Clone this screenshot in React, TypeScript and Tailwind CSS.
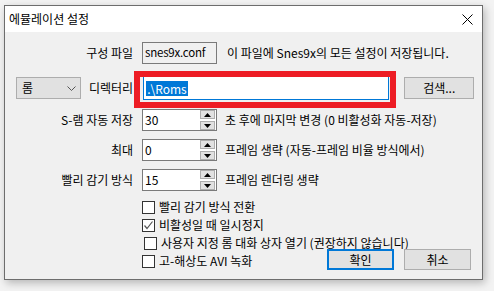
import React from 'react';

const font = { fontFamily: '"Noto Sans CJK KR", "Noto Sans", sans-serif' };

const SpinInput: React.FC<{ value: string }> = ({ value }) => (
  <div className="flex h-[22px] w-[75px] items-center border border-[#7a7a7a] bg-white">
    <span className="flex-1 pl-[2px] text-[12px] leading-none">{value}</span>
    <div className="mr-[1px] flex flex-col gap-[2px]">
      <div className="flex h-[9px] w-[15px] items-center justify-center border border-[#adadad] bg-[#e1e1e1]">
        <svg width="7" height="4" viewBox="0 0 7 4">
          <polygon points="3.5,0 7,4 0,4" fill="#000" />
        </svg>
      </div>
      <div className="flex h-[9px] w-[15px] items-center justify-center border border-[#adadad] bg-[#e1e1e1]">
        <svg width="7" height="4" viewBox="0 0 7 4">
          <polygon points="0,0 7,0 3.5,4" fill="#000" />
        </svg>
      </div>
    </div>
  </div>
);

const Checkbox: React.FC<{ label: string; checked?: boolean; indent?: boolean }> = ({ label, checked, indent }) => (
  <div className={`flex h-[18px] items-center gap-[4px] ${indent ? 'pl-[2px]' : ''}`}>
    <div className="flex h-[13px] w-[13px] items-center justify-center border border-[#333] bg-white">
      {checked && (
        <svg width="11" height="11" viewBox="0 0 11 11">
          <polyline points="1.5,5.5 4,8.5 9.5,1.5" fill="none" stroke="#555" strokeWidth="1.2" />
        </svg>
      )}
    </div>
    <span className="text-[12px] leading-none">{label}</span>
  </div>
);

const Row: React.FC<{ label: string; value: string; note: string; className?: string }> = ({ label, value, note, className }) => (
  <div className={`flex items-center ${className ?? ''}`}>
    <div className="w-[128px] text-right text-[12px]">{label}</div>
    <div className="ml-[9px]">
      <SpinInput value={value} />
    </div>
    <div className="ml-[8px] text-[12px]">{note}</div>
  </div>
);

const App: React.FC = () => {
  return (
    <div className="h-[291px] w-[494px] overflow-hidden bg-[#f3f3f3] pl-[4px] pt-[5px] text-black" style={font}>
      <div className="flex h-[275px] w-[479px] flex-col border border-[#6d6d6d] bg-[#f0f0f0] shadow-[2px_3px_8px_rgba(0,0,0,0.25)]">
        {/* Title bar */}
        <div className="flex h-[26px] items-center justify-between bg-white pl-[4px] pr-[9px]">
          <span className="text-[12px]">에뮬레이션 설정</span>
          <svg width="11" height="11" viewBox="0 0 11 11">
            <line x1="0.5" y1="0.5" x2="10.5" y2="10.5" stroke="#000" strokeWidth="1" />
            <line x1="10.5" y1="0.5" x2="0.5" y2="10.5" stroke="#000" strokeWidth="1" />
          </svg>
        </div>

        {/* Body */}
        <div className="flex flex-col pt-[10px]">
          {/* Config file */}
          <div className="flex items-center">
            <div className="w-[128px] text-right text-[12px]">구성 파일</div>
            <div className="ml-[9px] flex h-[22px] w-[75px] items-center border border-[#7a7a7a] bg-[#f0f0f0] pl-[2px] text-[11.5px] tracking-[-0.2px]">
              snes9x.conf
            </div>
            <div className="ml-[10px] text-[12px]">이 파일에 Snes9x의 모든 설정이 저장됩니다.</div>
          </div>

          {/* Directory */}
          <div className="mt-[12px] flex items-center">
            <div className="ml-[11px] flex h-[22px] w-[65px] items-center justify-between border border-[#adadad] bg-[#e1e1e1] pl-[5px] pr-[4px]">
              <span className="text-[12px]">롬</span>
              <svg width="9" height="5" viewBox="0 0 9 5">
                <polyline points="0.5,0.5 4.5,4.5 8.5,0.5" fill="none" stroke="#555" strokeWidth="1" />
              </svg>
            </div>
            <div className="ml-[8px] text-[12px]">디렉터리</div>
            <div className="relative ml-[10px]">
              <div className="flex h-[24px] w-[246px] items-center border border-[#0078d7] bg-white pl-[2px]">
                <span className="bg-[#0078d7] px-[1px] text-[12px] leading-[15px] text-white">.\Roms</span>
              </div>
              <div className="pointer-events-none absolute -left-[9px] -top-[5px] h-[37px] w-[262px] border-[6px] border-[#ed1c24]" />
            </div>
            <div className="ml-[15px] flex h-[22px] w-[70px] items-center justify-center border border-[#adadad] bg-[#e1e1e1] text-[12px]">
              검색...
            </div>
          </div>

          <Row className="mt-[9px]" label="S-램 자동 저장" value="30" note="초 후에 마지막 변경 (0 비활성화 자동-저장)" />
          <Row className="mt-[8px]" label="최대" value="0" note="프레임 생략 (자동-프레임 비율 방식에서)" />
          <Row className="mt-[8px]" label="빨리 감기 방식" value="15" note="프레임 렌더링 생략" />

          {/* Checkboxes and buttons */}
          <div className="mt-[7px] flex">
            <div className="ml-[137px] flex flex-col">
              <Checkbox label="빨리 감기 방식 전환" />
              <Checkbox label="비활성일 때 일시정지" checked />
              <Checkbox label="사용자 지정 롬 대화 상자 열기 (권장하지 않습니다)" indent />
              <Checkbox label="고-해상도 AVI 녹화" />
            </div>
          </div>
          <div className="-mt-[21px] flex justify-end gap-[10px] pr-[11px]">
            <div className="flex h-[21px] w-[67px] items-center justify-center border-2 border-[#0078d7] bg-[#e1e1e1] text-[12px]">
              확인
            </div>
            <div className="flex h-[21px] w-[67px] items-center justify-center border border-[#adadad] bg-[#e1e1e1] text-[12px]">
              취소
            </div>
          </div>
        </div>
      </div>
    </div>
  );
};

export default App;
